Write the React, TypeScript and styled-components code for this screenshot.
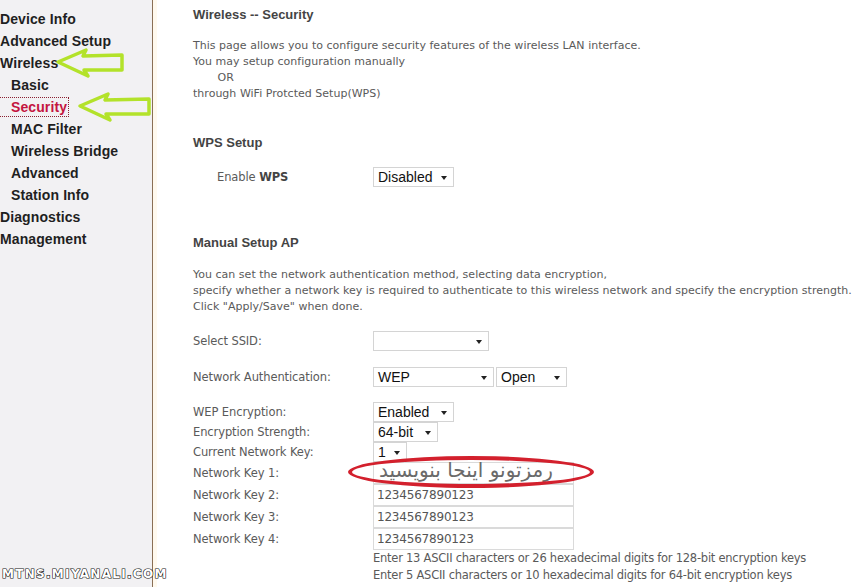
import { createGlobalStyle, styled } from "styled-components";

const GlobalStyle = createGlobalStyle`
  html, body {
    margin: 0;
    padding: 0;
    background: #ffffff;
  }
  body {
    font-family: "DejaVu Sans", sans-serif;
  }
`;

const Page = styled.div`
  position: relative;
  display: flex;
  width: 865px;
  height: 587px;
  overflow: hidden;
  background: #ffffff;
`;

const Sidebar = styled.div`
  width: 153px;
  flex-shrink: 0;
  background: #f2f1f3;
  border-right: 1px solid #8a6f55;
  padding-top: 8px;
  box-sizing: border-box;
`;

const Strip = styled.div`
  width: 4px;
  flex-shrink: 0;
  background: #fff9ee;
`;

const NavItem = styled.div<{ $sub?: boolean; $active?: boolean }>`
  display: flex;
  align-items: center;
  height: 22px;
  padding-left: ${(p) => (p.$sub ? "11px" : "0")};
  font-family: "Liberation Sans", Arial, sans-serif;
  font-weight: 700;
  font-size: 14px;
  letter-spacing: 0.1px;
  color: ${(p) => (p.$active ? "#c4153f" : "#1f1f1f")};
`;

const ActiveBox = styled.span`
  margin-left: -11px;
  padding: 0 1px 0 11px;
  line-height: 18px;
  outline: 1px dotted #8b2030;
`;

const Main = styled.div`
  flex: 1;
  padding-left: 36px;
  padding-top: 6px;
  font-family: "DejaVu Sans", sans-serif;
  font-size: 11px;
  color: #5a5a5a;
`;

const Heading = styled.div<{ $top: number }>`
  margin-top: ${(p) => p.$top}px;
  height: 16px;
  line-height: 16px;
  font-family: "Liberation Sans", Arial, sans-serif;
  font-weight: 700;
  font-size: 13px;
  color: #444;
`;

const Para = styled.div<{ $top: number }>`
  margin-top: ${(p) => p.$top}px;
  line-height: 16px;
  font-size: 11px;
  letter-spacing: 0.02px;
  white-space: pre;
`;

const Row = styled.div<{ $top: number; $h: number; $indent?: number }>`
  display: flex;
  align-items: center;
  margin-top: ${(p) => p.$top}px;
  height: ${(p) => p.$h}px;
  padding-left: ${(p) => p.$indent ?? 0}px;
`;

const Label = styled.div<{ $w: number }>`
  width: ${(p) => p.$w}px;
  flex-shrink: 0;
  font-size: 11.5px;
  letter-spacing: -0.1px;
  white-space: nowrap;
  b {
    color: #444;
  }
`;

const Select = styled.div<{ $w: number }>`
  position: relative;
  display: flex;
  align-items: center;
  width: ${(p) => p.$w}px;
  height: 20px;
  box-sizing: border-box;
  border: 1px solid #d4d4d4;
  background: #fff;
  padding-left: 4px;
  margin-right: 2px;
  font-family: "Liberation Sans", Arial, sans-serif;
  font-size: 14px;
  color: #111;
  &::after {
    content: "";
    position: absolute;
    right: 6px;
    top: 8px;
    border-left: 3px solid transparent;
    border-right: 3px solid transparent;
    border-top: 4px solid #222;
  }
`;

const Input = styled.div`
  display: flex;
  align-items: center;
  width: 201px;
  height: 22px;
  box-sizing: border-box;
  border: 1px solid #dadada;
  padding-left: 3px;
  font-size: 12px;
  color: #555;
  letter-spacing: -0.2px;
`;

const Note = styled.div`
  padding-left: 180px;
  line-height: 17px;
  font-size: 11.5px;
  letter-spacing: -0.25px;
  white-space: nowrap;
`;

const Ellipse = styled.div`
  position: absolute;
  left: 348px;
  top: 456px;
  width: 246px;
  height: 32px;
  box-sizing: border-box;
  border: 4px solid #d3202d;
  border-radius: 50%;
`;

const Farsi = styled.div`
  position: absolute;
  left: 373px;
  top: 459px;
  width: 180px;
  line-height: 22px;
  direction: rtl;
  font-family: "DejaVu Sans", sans-serif;
  font-size: 20px;
  color: #6a6a6a;
  white-space: nowrap;
`;

const Arrow = styled.svg<{ $x: number; $y: number }>`
  position: absolute;
  left: ${(p) => p.$x}px;
  top: ${(p) => p.$y}px;
`;

const Watermark = styled.div`
  position: absolute;
  left: 2px;
  bottom: 6px;
  font-family: "DejaVu Sans", sans-serif;
  font-weight: 700;
  font-size: 12px;
  letter-spacing: 1.3px;
  color: #ffffff;
  -webkit-text-stroke: 1.2px #111;
  paint-order: stroke fill;
`;

const navItems: { label: string; sub?: boolean; active?: boolean }[] = [
  { label: "Device Info" },
  { label: "Advanced Setup" },
  { label: "Wireless" },
  { label: "Basic", sub: true },
  { label: "Security", sub: true, active: true },
  { label: "MAC Filter", sub: true },
  { label: "Wireless Bridge", sub: true },
  { label: "Advanced", sub: true },
  { label: "Station Info", sub: true },
  { label: "Diagnostics" },
  { label: "Management" },
];

// hand drawn outline arrow pointing left
const ArrowIcon = ({ x, y, w }: { x: number; y: number; w: number }) => (
  <Arrow $x={x} $y={y} width={w} height={32} viewBox={`0 0 ${w} 32`}>
    <path
      d={`M3 15 L31 3 L28 9 L${w - 3} 8 L${w - 3} 23 L29 23 L33 29 Z`}
      fill="none"
      stroke="#b3e22a"
      strokeWidth={3.5}
      strokeLinejoin="round"
    />
  </Arrow>
);

export default function App() {
  return (
    <Page>
      <GlobalStyle />
      <Sidebar>
        {navItems.map((item) => (
          <NavItem key={item.label} $sub={item.sub} $active={item.active}>
            {item.active ? <ActiveBox>{item.label}</ActiveBox> : item.label}
          </NavItem>
        ))}
      </Sidebar>
      <Strip />
      <Main>
        <Heading $top={1}>Wireless -- Security</Heading>
        <Para $top={15}>
          {"This page allows you to configure security features of the wireless LAN interface.\nYou may setup configuration manually\n       OR\nthrough WiFi Protcted Setup(WPS)"}
        </Para>
        <Heading $top={33}>WPS Setup</Heading>
        <Row $top={16} $h={20} $indent={24}>
          <Label $w={156}>
            Enable <b>WPS</b>
          </Label>
          <Select $w={81}>Disabled</Select>
        </Row>
        <Heading $top={48}>Manual Setup AP</Heading>
        <Para $top={16}>
          {"You can set the network authentication method, selecting data encryption,\nspecify whether a network key is required to authenticate to this wireless network and specify the encryption strength.\nClick \"Apply/Save\" when done."}
        </Para>
        <Row $top={15} $h={22}>
          <Label $w={180}>Select SSID:</Label>
          <Select $w={116} />
        </Row>
        <Row $top={14} $h={22}>
          <Label $w={180}>Network Authentication:</Label>
          <Select $w={121}>WEP</Select>
          <Select $w={71}>Open</Select>
        </Row>
        <Row $top={14} $h={20}>
          <Label $w={180}>WEP Encryption:</Label>
          <Select $w={81}>Enabled</Select>
        </Row>
        <Row $top={0} $h={20}>
          <Label $w={180}>Encryption Strength:</Label>
          <Select $w={65}>64-bit</Select>
        </Row>
        <Row $top={0} $h={20}>
          <Label $w={180}>Current Network Key:</Label>
          <Select $w={34}>1</Select>
        </Row>
        <Row $top={0} $h={22}>
          <Label $w={180}>Network Key 1:</Label>
          <Input />
        </Row>
        <Row $top={0} $h={22}>
          <Label $w={180}>Network Key 2:</Label>
          <Input>1234567890123</Input>
        </Row>
        <Row $top={0} $h={22}>
          <Label $w={180}>Network Key 3:</Label>
          <Input>1234567890123</Input>
        </Row>
        <Row $top={0} $h={22}>
          <Label $w={180}>Network Key 4:</Label>
          <Input>1234567890123</Input>
        </Row>
        <Note>Enter 13 ASCII characters or 26 hexadecimal digits for 128-bit encryption keys</Note>
        <Note>Enter 5 ASCII characters or 10 hexadecimal digits for 64-bit encryption keys</Note>
      </Main>
      <Farsi>رمزتونو اینجا بنویسید</Farsi>
      <Ellipse />
      <ArrowIcon x={55} y={47} w={70} />
      <ArrowIcon x={77} y={91} w={75} />
      <Watermark>MTNS.MIYANALI.COM</Watermark>
    </Page>
  );
}
